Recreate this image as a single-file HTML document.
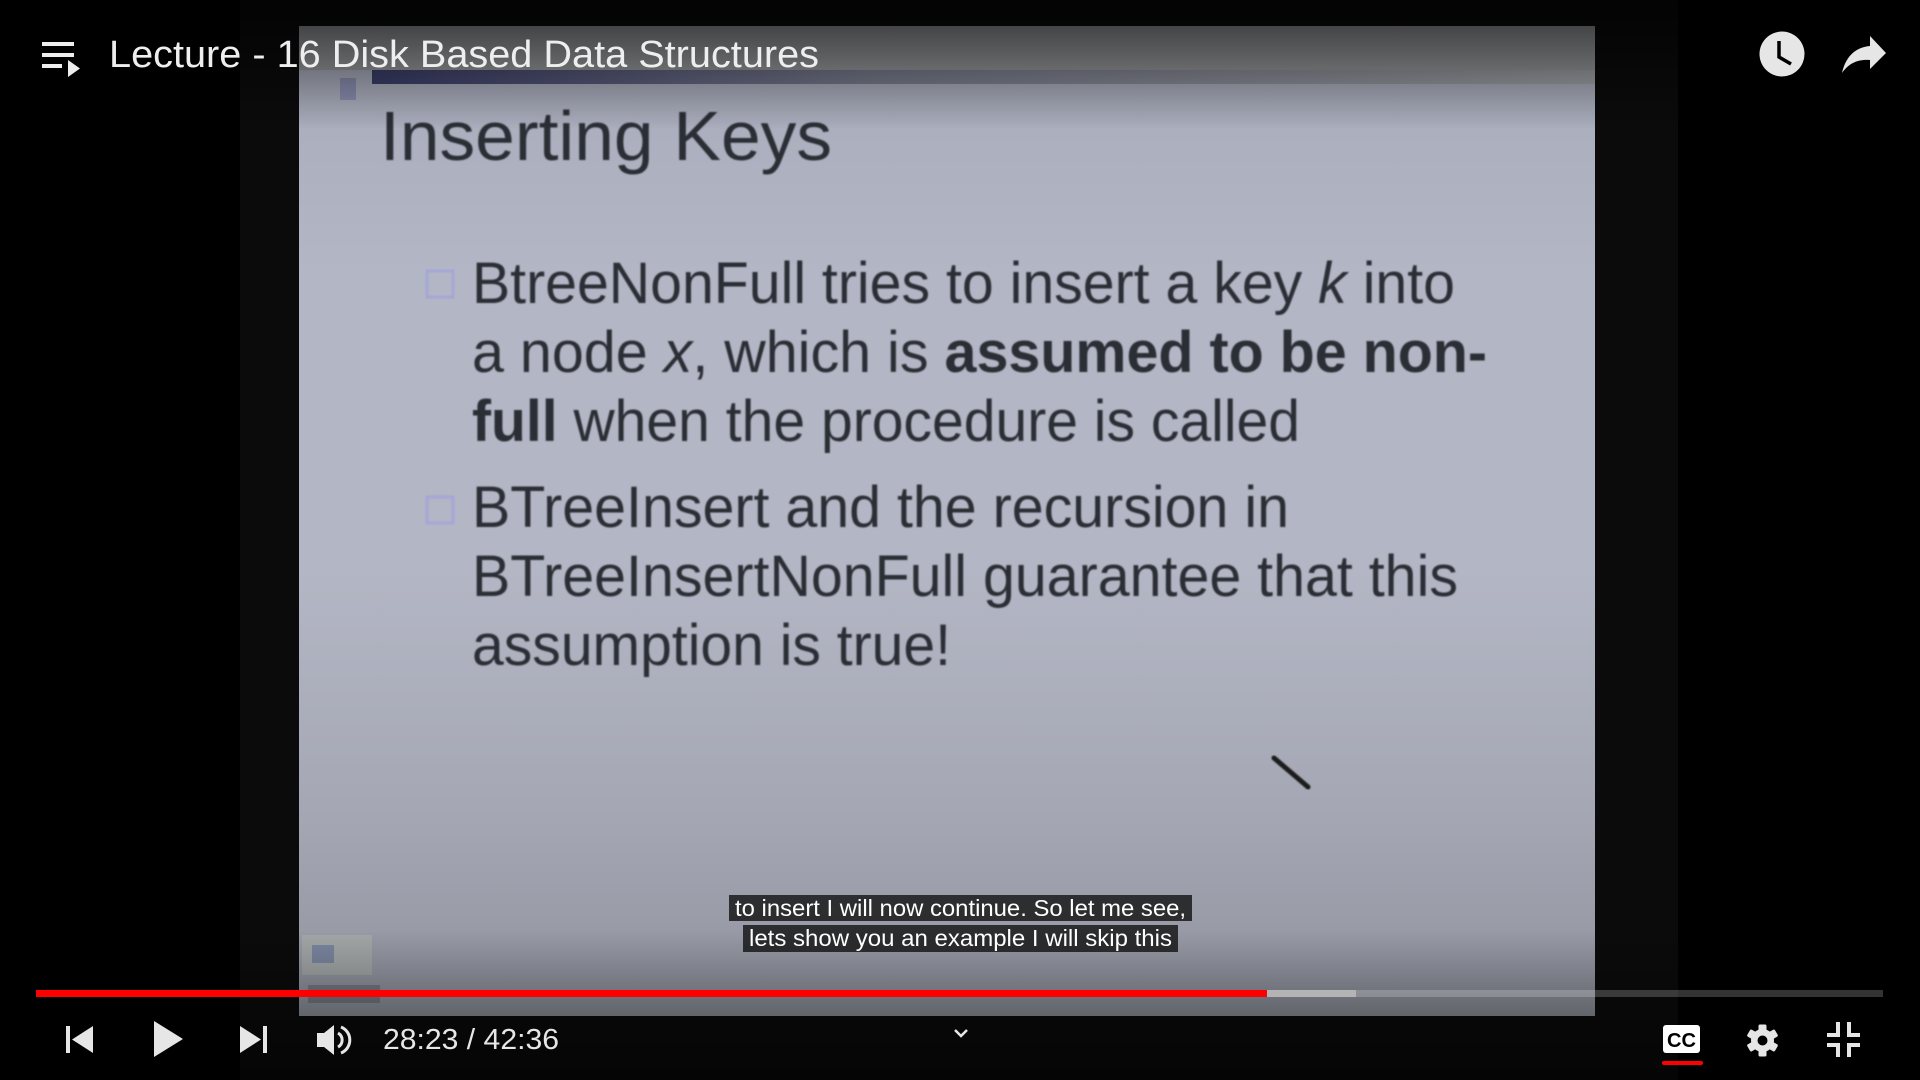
<!DOCTYPE html>
<html><head><meta charset="utf-8"><style>
html,body{margin:0;padding:0;background:#000;width:1920px;height:1080px;overflow:hidden}
svg{position:absolute;left:0;top:0}
</style></head><body>
<svg width="1920" height="1080" viewBox="0 0 1920 1080" xmlns="http://www.w3.org/2000/svg">
<defs>
<linearGradient id="sl" x1="0" y1="0" x2="0" y2="1">
<stop offset="0" stop-color="#a6aab9"/>
<stop offset="0.25" stop-color="#b3b6c5"/>
<stop offset="0.55" stop-color="#b3b6c4"/>
<stop offset="0.8" stop-color="#a4a7b3"/>
<stop offset="1" stop-color="#90939e"/>
</linearGradient>
<linearGradient id="band" x1="0" y1="0" x2="1" y2="0">
<stop offset="0" stop-color="#3a3d6a"/>
<stop offset="0.4" stop-color="#7a7d90"/>
<stop offset="1" stop-color="#a0a2a6"/>
</linearGradient>
<linearGradient id="topg" x1="0" y1="0" x2="0" y2="1">
<stop offset="0" stop-color="#000" stop-opacity="0.7"/>
<stop offset="1" stop-color="#000" stop-opacity="0"/>
</linearGradient>
<linearGradient id="botg" x1="0" y1="0" x2="0" y2="1">
<stop offset="0" stop-color="#000" stop-opacity="0"/>
<stop offset="1" stop-color="#000" stop-opacity="0.55"/>
</linearGradient>
<filter id="bl"><feGaussianBlur stdDeviation="0.9"/></filter>
</defs>
<rect x="240" y="0" width="1438" height="1080" fill="#0b0b0b"/>
<rect x="299" y="26" width="1296" height="990" fill="url(#sl)"/>
<rect x="299" y="26" width="1296" height="44" fill="#9a9c9e"/>
<rect x="372" y="70" width="1223" height="14" fill="url(#band)"/>
<rect x="340" y="78" width="16" height="22" fill="#7c7fa8" opacity="0.7"/>
<g fill="#2c2d35" font-family="Liberation Sans, Arial, sans-serif" filter="url(#bl)">
<text x="380" y="160" font-size="70" textLength="452" lengthAdjust="spacingAndGlyphs">Inserting Keys</text>
<g font-size="58">
<text x="472" y="303" textLength="983" lengthAdjust="spacingAndGlyphs">BtreeNonFull tries to insert a key <tspan font-style="italic">k</tspan> into</text>
<text x="472" y="372" textLength="1015" lengthAdjust="spacingAndGlyphs">a node <tspan font-style="italic">x</tspan>, which is <tspan font-weight="bold">assumed to be non-</tspan></text>
<text x="472" y="441" textLength="828" lengthAdjust="spacingAndGlyphs"><tspan font-weight="bold">full</tspan> when the procedure is called</text>
<text x="472" y="527" textLength="817" lengthAdjust="spacingAndGlyphs">BTreeInsert and the recursion in</text>
<text x="472" y="596" textLength="986" lengthAdjust="spacingAndGlyphs">BTreeInsertNonFull guarantee that this</text>
<text x="472" y="665" textLength="479" lengthAdjust="spacingAndGlyphs">assumption is true!</text>
</g></g>
<rect x="427" y="271" width="26" height="26" fill="none" stroke="#a4a6d8" stroke-width="3" filter="url(#bl)"/>
<rect x="427" y="497" width="26" height="26" fill="none" stroke="#a4a6d8" stroke-width="3" filter="url(#bl)"/>
<line x1="1274" y1="758" x2="1308" y2="787" stroke="#1a1a1a" stroke-width="5" stroke-linecap="round" filter="url(#bl)"/>
<rect x="302" y="935" width="70" height="40" fill="#a8aca8" opacity="0.7"/>
<rect x="312" y="945" width="22" height="18" fill="#7a86a0"/>
<rect x="308" y="985" width="72" height="18" fill="#5c5f66" opacity="0.5"/>
<rect x="0" y="0" width="1920" height="130" fill="url(#topg)"/>
<rect x="0" y="930" width="1920" height="150" fill="url(#botg)"/>
<!-- header -->
<g fill="#eee">
<rect x="42" y="42" width="32" height="4"/>
<rect x="42" y="53" width="32" height="4"/>
<rect x="42" y="64" width="20" height="4"/>
<path d="M68 60 L80 68.5 L68 77 Z"/>
</g>
<text x="109" y="67" fill="#eee" font-family="Liberation Sans, Arial, sans-serif" font-size="38" textLength="710" lengthAdjust="spacingAndGlyphs">Lecture - 16 Disk Based Data Structures</text>
<circle cx="1782" cy="54" r="22.5" fill="#e6e6e6"/>
<path d="M1779 41 V57 L1791 64" fill="none" stroke="#000" stroke-width="3.5"/>
<path d="M1842 73 C1846 55 1857 47 1870 46 V36 L1886 53 L1870 69 V60 C1858 59 1849 63 1842 73 Z" fill="#e6e6e6"/>
<!-- captions -->
<rect x="729" y="895" width="463" height="26" fill="#080808" opacity="0.75"/>
<rect x="743" y="925" width="435" height="27" fill="#080808" opacity="0.75"/>
<g fill="#fff" font-family="Liberation Sans, Arial, sans-serif" font-size="23">
<text x="735" y="916" textLength="451" lengthAdjust="spacingAndGlyphs">to insert I will now continue. So let me see,</text>
<text x="749" y="946" textLength="423" lengthAdjust="spacingAndGlyphs">lets show you an example I will skip this</text>
</g>
<!-- progress -->
<rect x="36" y="990" width="1847" height="7" fill="#fff" opacity="0.2"/>
<rect x="1267" y="990" width="89" height="7" fill="#bbb" opacity="0.85"/>
<rect x="36" y="990" width="1231" height="7" fill="#f00"/>
<!-- controls -->
<g fill="#e6e6e6">
<rect x="66" y="1026" width="4" height="27"/>
<path d="M93 1026 V1053 L72 1039.5 Z"/>
<path d="M154 1021 L183 1039 L154 1057 Z"/>
<path d="M240 1026 L261 1039.5 L240 1053 Z"/>
<rect x="263" y="1026" width="4" height="27"/>
<path d="M317 1033 H324 L334 1025 V1055 L324 1047 H317 Z"/>
</g>
<path d="M338 1033 A8 8 0 0 1 338 1047" fill="none" stroke="#e6e6e6" stroke-width="3"/>
<path d="M341 1027 A14 14 0 0 1 341 1053" fill="none" stroke="#e6e6e6" stroke-width="3"/>
<text x="383" y="1049" fill="#e6e6e6" font-family="Liberation Sans, Arial, sans-serif" font-size="29" textLength="176" lengthAdjust="spacingAndGlyphs">28:23 / 42:36</text>
<path d="M955 1030 L961 1036 L967 1030" fill="none" stroke="#e6e6e6" stroke-width="2.5"/>
<rect x="1663" y="1025" width="37" height="28" rx="3" fill="#fff"/>
<g font-family="Liberation Sans, Arial, sans-serif" font-weight="bold" font-size="20" fill="#000"><text x="1667" y="1047" textLength="29" lengthAdjust="spacingAndGlyphs">CC</text></g>
<rect x="1662" y="1061" width="41" height="4" rx="2" fill="#f00"/>
<g transform="translate(1762.5 1040.5)" fill="#e6e6e6">
<circle r="11.5"/>
<rect x="-4" y="-16" width="8" height="32" rx="1.5"/>
<rect x="-4" y="-16" width="8" height="32" rx="1.5" transform="rotate(60)"/>
<rect x="-4" y="-16" width="8" height="32" rx="1.5" transform="rotate(120)"/>
</g>
<circle cx="1762.5" cy="1040.5" r="5" fill="#000"/>
<g fill="none" stroke="#e6e6e6" stroke-width="4">
<path d="M1838 1022 V1035 H1827"/>
<path d="M1849 1022 V1035 H1860"/>
<path d="M1827 1045 H1838 V1057"/>
<path d="M1860 1045 H1849 V1057"/>
</g>
</svg>
</body></html>
